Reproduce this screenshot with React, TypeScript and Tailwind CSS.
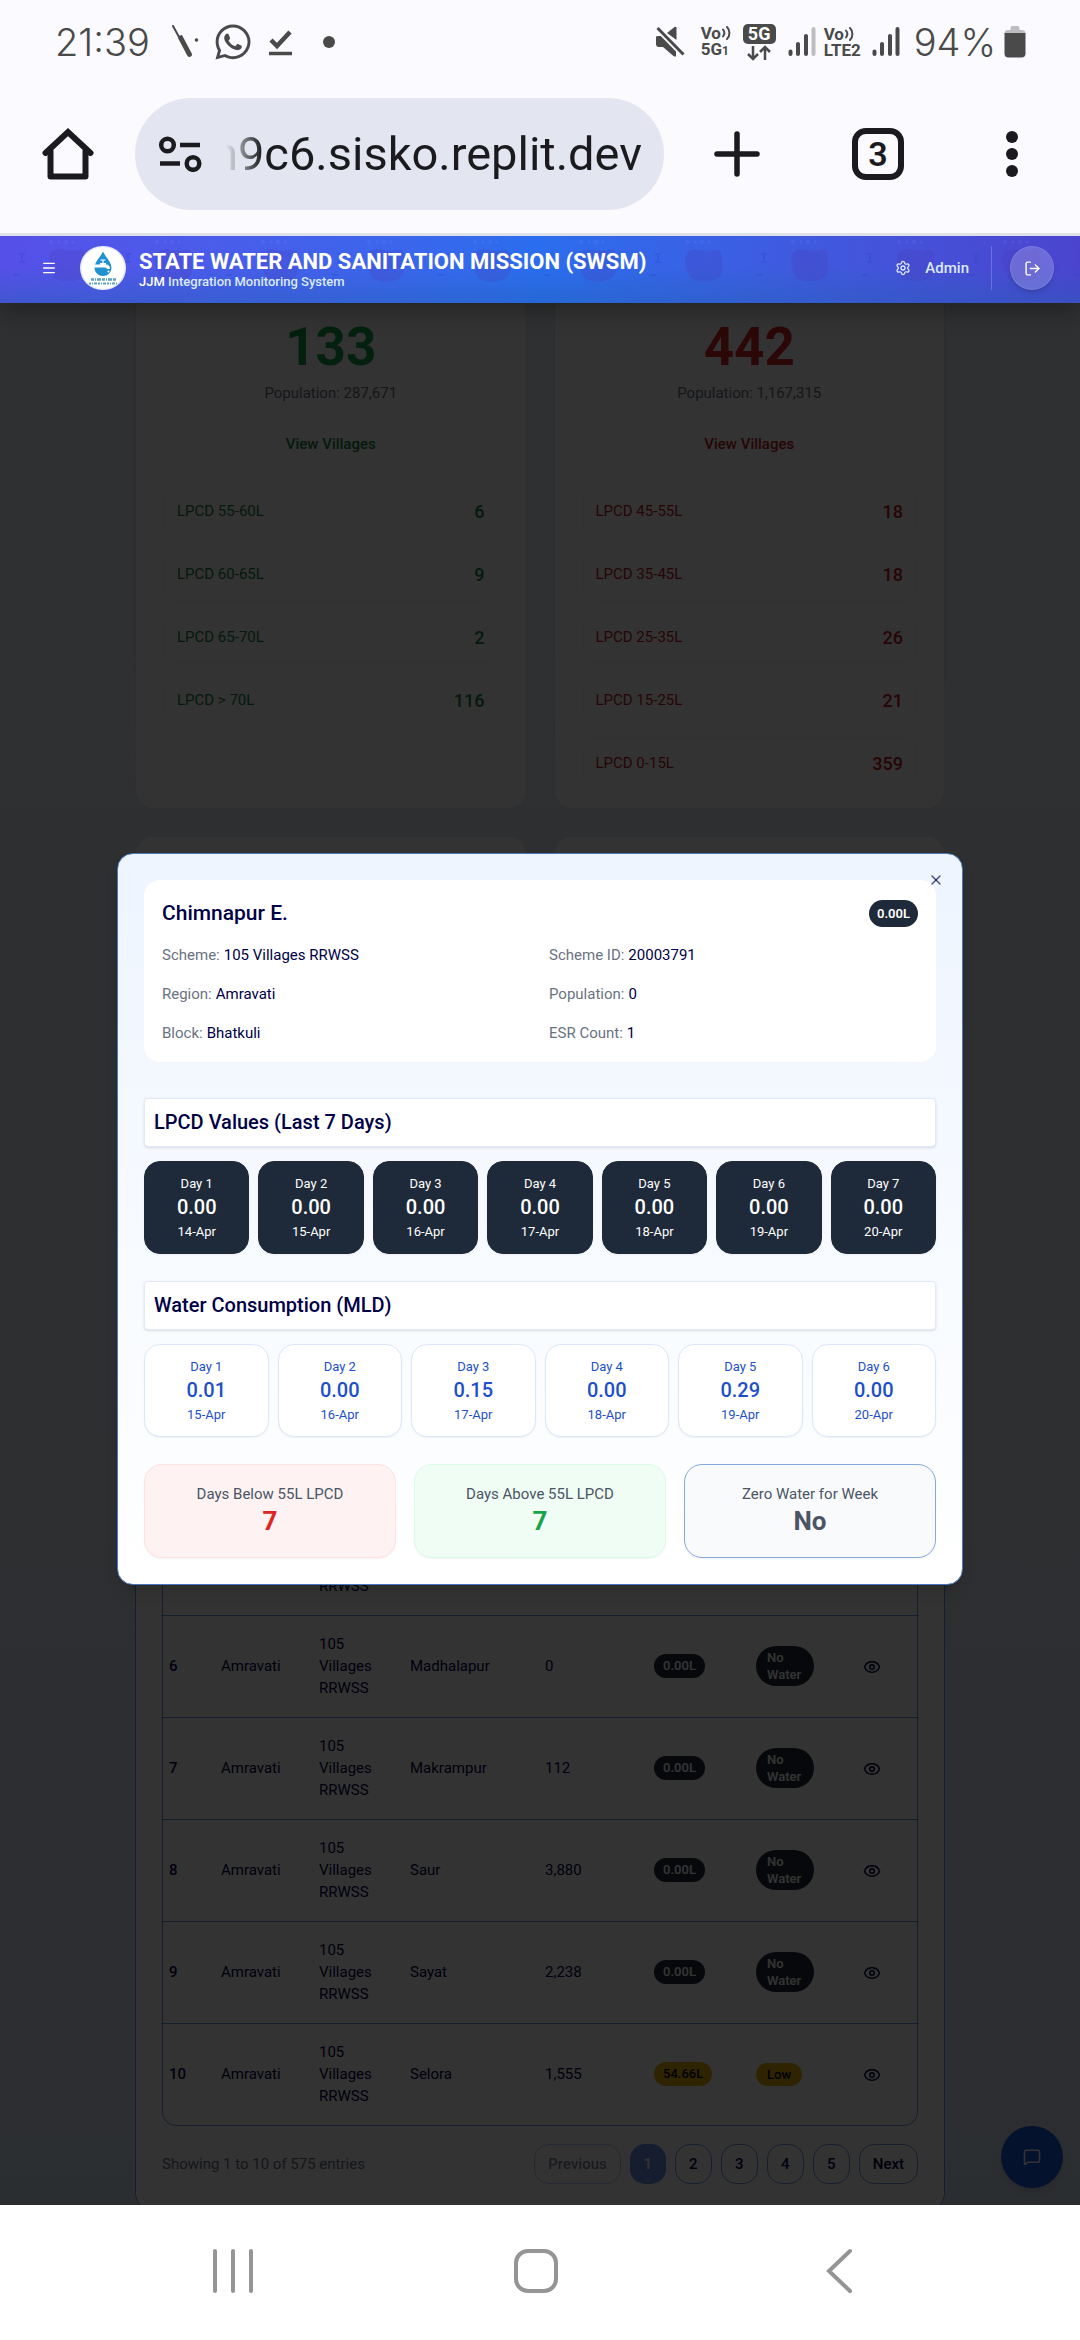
import React from "react";
import { Eye, LogOut, Menu, MessageSquare, Settings, X } from "lucide-react";
import { FaWhatsapp } from "react-icons/fa";

type Band = { label: string; count: string };

const fulfilled: Band[] = [
  { label: "LPCD 55-60L", count: "6" },
  { label: "LPCD 60-65L", count: "9" },
  { label: "LPCD 65-70L", count: "2" },
  { label: "LPCD > 70L", count: "116" },
];

const deficient: Band[] = [
  { label: "LPCD 45-55L", count: "18" },
  { label: "LPCD 35-45L", count: "18" },
  { label: "LPCD 25-35L", count: "26" },
  { label: "LPCD 15-25L", count: "21" },
  { label: "LPCD 0-15L", count: "359" },
];

const villages = [
  { id: 5, name: "Chimnapur E.", population: "0", lpcd: "0.00L", status: "No Water" },
  { id: 6, name: "Madhalapur", population: "0", lpcd: "0.00L", status: "No Water" },
  { id: 7, name: "Makrampur", population: "112", lpcd: "0.00L", status: "No Water" },
  { id: 8, name: "Saur", population: "3,880", lpcd: "0.00L", status: "No Water" },
  { id: 9, name: "Sayat", population: "2,238", lpcd: "0.00L", status: "No Water" },
  { id: 10, name: "Selora", population: "1,555", lpcd: "54.66L", status: "Low" },
];

const details = [
  ["Scheme:", "105 Villages RRWSS"],
  ["Scheme ID:", "20003791"],
  ["Region:", "Amravati"],
  ["Population:", "0"],
  ["Block:", "Bhatkuli"],
  ["ESR Count:", "1"],
];

const lpcdDays = ["14-Apr", "15-Apr", "16-Apr", "17-Apr", "18-Apr", "19-Apr", "20-Apr"];

const consumption = [
  ["0.01", "15-Apr"],
  ["0.00", "16-Apr"],
  ["0.15", "17-Apr"],
  ["0.00", "18-Apr"],
  ["0.29", "19-Apr"],
  ["0.00", "20-Apr"],
];

function Signal({ weak = false }: { weak?: boolean }) {
  return (
    <svg width="28" height="30" viewBox="0 0 28 30" fill="none" stroke="#4a4a4a" strokeWidth="4" strokeLinecap="round">
      <path d="M2.500 24.500V27M10 17V27M18 9V27" />
      <path d="M25.500 2V27" stroke={weak ? "#bdbdbf" : "#4a4a4a"} />
    </svg>
  );
}

function Volte({ line, mark }: { line: string; mark?: string }) {
  return (
    <div className="flex flex-col text-[17px] leading-[16px] font-bold">
      <div className="flex items-center">
        Vo
        <svg width="11" height="16" viewBox="0 0 11 16" fill="none" stroke="#4a4a4a" strokeWidth="2" strokeLinecap="round">
          <path d="M2 4.500C3.600 6.500 3.600 9.500 2 11.500M6 2C9.200 5 9.200 11 6 14" />
        </svg>
      </div>
      <div>
        {line}
        {mark && <span className="text-[12px]">{mark}</span>}
      </div>
    </div>
  );
}

function StatusBar() {
  return (
    <div className="flex h-[84px] shrink-0 items-center justify-between pr-[54px] pl-[55px] text-[#4a4a4a]">
      <div className="flex items-center">
        <span className="w-[98px] font-['Inter',sans-serif] text-[38px] leading-[40px] font-light whitespace-nowrap">21:39</span>
        <svg className="ml-[18px]" width="28" height="34" viewBox="0 0 28 34" fill="none">
          <path d="M2 1L8 12" stroke="#4a4a4a" strokeWidth="2" strokeLinecap="round" />
          <path d="M7 11L11 10L21 29C21.500 31.500 18 33 16.500 31L7 13Z" fill="#4a4a4a" />
          <circle cx="25.500" cy="15" r="1.800" fill="#4a4a4a" />
        </svg>
        <FaWhatsapp className="ml-[14px]" size={40} />
        <svg className="ml-[16px]" width="24" height="27" viewBox="0 0 24 27" fill="none" stroke="#4a4a4a" strokeWidth="4">
          <path d="M2 11L8 17L21 3" strokeWidth="4.500" />
          <path d="M0 24.500H23" strokeWidth="3.500" />
        </svg>
        <span className="ml-[30px] size-3 rounded-full bg-[#4a4a4a]" />
      </div>
      <div className="flex items-center">
        <svg width="31" height="32" viewBox="0 0 31 32">
          <path d="M1 11Q1 10 3 10H9L21 22V30Q20 31 18.500 30L8 21H4Q1 21 1 18Z" fill="#4a4a4a" />
          <path d="M12 7L19.500 1Q21.500 0 21.500 2V14Z" fill="#4a4a4a" />
          <path d="M2.500 2.500L28.500 29" stroke="#fbfaff" strokeWidth="6" />
          <path d="M2.500 2L28.500 28.500" stroke="#4a4a4a" strokeWidth="3" />
        </svg>
        <div className="ml-[15px] w-[33px]">
          <Volte line="5G" mark="1" />
        </div>
        <div className="ml-[9px] flex w-[33px] flex-col items-center">
          <span className="w-full rounded-[5px] bg-[#4a4a4a] text-center text-[18px] leading-[20px] font-bold text-white">5G</span>
          <svg width="26" height="17" viewBox="0 0 26 17" fill="none" stroke="#4a4a4a" strokeWidth="2.500">
            <path d="M7 2V15M2 10L7 15L12 10M19 16V3M14 8L19 3L24 8" />
          </svg>
        </div>
        <div className="ml-[12px]">
          <Signal weak />
        </div>
        <div className="ml-[8px] w-[39px]">
          <Volte line="LTE2" />
        </div>
        <div className="ml-[9px]">
          <Signal />
        </div>
        <span className="ml-[14px] font-['Inter',sans-serif] text-[38px] leading-[40px] font-light">94%</span>
        <svg className="ml-[8px]" width="22" height="32" viewBox="0 0 22 32">
          <path d="M6.500 4V2Q6.500 0 8.500 0H13.500Q15.500 0 15.500 2V4H18Q21.500 4 21.500 8H0.500Q0.500 4 4 4Z" fill="#bdbdbf" />
          <path d="M0.500 7H21.500V27.500Q21.500 31.500 17.500 31.500H4.500Q0.500 31.500 0.500 27.500Z" fill="#4a4a4a" />
        </svg>
      </div>
    </div>
  );
}

function AddressBar() {
  return (
    <div className="flex h-[152px] shrink-0 items-start border-b-[3px] border-[#dfe1ea] pt-[14px] pr-[12px] text-[#1b1b1f]">
      <button aria-label="Home" className="flex h-28 w-[135px] items-center justify-center">
        <svg width="54" height="54" viewBox="0 0 54 54" fill="none" stroke="#1b1b1f" strokeWidth="6" strokeLinejoin="round" strokeLinecap="round">
          <path d="M4.500 26L27 5L49.500 26" strokeLinejoin="miter" />
          <path d="M9.500 24V49.500H44.500V24" />
        </svg>
      </button>
      <div className="flex h-28 min-w-0 flex-1 items-center rounded-full bg-[#e3e6f0] pr-[22px] pl-[23px]">
        <svg className="shrink-0" width="44" height="36" viewBox="0 0 44 36" fill="none" stroke="#1b1b1f" strokeWidth="4.500">
          <circle cx="9.500" cy="9" r="6.300" />
          <path d="M22 9H42M2 27.500H22" />
          <circle cx="35" cy="27.500" r="6.300" />
        </svg>
        <input
          aria-label="Address"
          readOnly
          defaultValue="n9c6.sisko.replit.dev"
          className="h-16 min-w-0 flex-1 bg-transparent text-right text-[47px] outline-none [mask-image:linear-gradient(to_right,transparent_24px,black_60px)]"
        />
      </div>
      <button aria-label="New tab" className="ml-[17px] flex h-28 w-28 items-center justify-center">
        <svg width="46" height="46" viewBox="0 0 46 46" stroke="#1b1b1f" strokeWidth="5.500" strokeLinecap="round">
          <path d="M23 3V43M3 23H43" />
        </svg>
      </button>
      <button aria-label="Tabs" className="ml-[29px] flex h-28 w-28 items-center justify-center">
        <span className="flex size-[52px] items-center justify-center rounded-[14px] border-[6px] border-[#1b1b1f] text-[34px] leading-[34px] font-semibold">3</span>
      </button>
      <button aria-label="More" className="ml-[22px] flex h-28 w-28 items-center justify-center">
        <svg width="12" height="48" viewBox="0 0 12 48" fill="#1b1b1f">
          <circle cx="6" cy="7" r="6" />
          <circle cx="6" cy="24" r="6" />
          <circle cx="6" cy="41" r="6" />
        </svg>
      </button>
    </div>
  );
}

function HeaderPattern() {
  return (
    <svg className="absolute inset-0 size-full" aria-hidden="true">
      <defs>
        <pattern id="tile" width="106" height="67" patternUnits="userSpaceOnUse" x="38">
          <path d="M12 18Q16 11 28 14Q36 16 44 13Q50 16 48 28Q50 40 40 44Q26 48 16 42Q8 28 12 18Z" fill="#4a36b0" opacity="0.220" />
          <g stroke="#8a9cff" fill="none" opacity="0.150">
            <circle cx="13" cy="6" r="1.500" />
            <circle cx="21" cy="6" r="1" />
            <circle cx="28" cy="6" r="1.500" />
            <circle cx="35" cy="6" r="1" />
          </g>
          <path d="M87 18H93M90 18V26M87 26H93M82 39H88" stroke="#2038c8" strokeWidth="2" opacity="0.220" />
        </pattern>
      </defs>
      <rect width="100%" height="100%" fill="url(#tile)" />
    </svg>
  );
}

function Logo() {
  return (
    <svg className="shrink-0" width="46" height="44" viewBox="0 0 46 44">
      <rect width="46" height="44" rx="22" fill="#e6e9fb" />
      <rect x="1.500" y="1.500" width="43" height="41" rx="20.500" fill="#fff" />
      <path d="M23 5.500C25.500 11 31.500 16 31.500 22A8.500 8 0 0 1 14.500 22C14.500 16 20.500 11 23 5.500Z" fill="#1f93cf" />
      <path d="M14 18.500H20V17H26V18.500Q30 18.500 30 23H27Q27 21.500 25 21.500H14Z" fill="#fff" />
      <path d="M23 14V17M20.500 14H25.500" stroke="#fff" strokeWidth="1.200" />
      <circle cx="28.500" cy="25.500" r="1" fill="#fff" />
      <path d="M11 33.500H36" stroke="#5ba3c0" strokeWidth="2.500" strokeDasharray="3 1 1 1 4 1" />
      <path d="M9 37.500H37" stroke="#5ba3c0" strokeWidth="2" strokeDasharray="2 1 1 1 3 1" />
    </svg>
  );
}

function AppHeader() {
  return (
    <header className="relative z-30 flex h-[67px] shrink-0 items-center bg-linear-to-r from-[#5650e8] via-[#2a6dee] to-[#4b44cf] pr-[26px] pb-[3px] pl-[41px] text-white shadow-[0_10px_20px_rgba(0,0,0,0.25)]">
      <div className="absolute inset-0 bg-linear-to-b from-transparent from-45% to-[#2060b0]/40" />
      <HeaderPattern />
      <button aria-label="Menu" className="relative">
        <Menu size={16} />
      </button>
      <div className="relative ml-[23px]">
        <Logo />
      </div>
      <div className="relative ml-[13px] pt-1">
        <h1 className="text-[22px] leading-[24px] font-bold">STATE WATER AND SANITATION MISSION (SWSM)</h1>
        <p className="text-[13px] leading-[16px] font-medium text-blue-100">
          <span className="text-white">JJM</span> Integration Monitoring System
        </p>
      </div>
      <div className="relative ml-auto flex items-center">
        <button className="flex items-center gap-[14px] text-[15px] font-medium text-blue-100">
          <Settings size={16} />
          Admin
        </button>
        <span className="mr-[18px] ml-[22px] h-11 w-px bg-white/20" />
        <button aria-label="Log out" className="flex size-11 items-center justify-center rounded-full border border-white/10 bg-white/20 shadow-md">
          <LogOut size={17} />
        </button>
      </div>
    </header>
  );
}

function SummaryCard({
  total,
  population,
  bands,
  tone,
  bandTone,
}: {
  total: string;
  population: string;
  bands: Band[];
  tone: string;
  bandTone: string;
}) {
  return (
    <section className="flex flex-col rounded-b-[18px] border border-t-0 border-gray-200 bg-white px-7 pt-4 pb-[18px]">
      <p className={`text-center text-[53px] leading-[54px] font-bold ${tone}`}>{total}</p>
      <p className="mt-2 text-center text-[15px] leading-[22px] text-gray-500">Population: {population}</p>
      <button className={`mx-auto mt-5 h-10 px-4 text-[15px] font-medium ${bandTone}`}>View Villages</button>
      <ul className={`mt-5 flex flex-col gap-[9px] ${bandTone}`}>
        {bands.map((b) => (
          <li key={b.label} className="flex h-[54px] items-center justify-between rounded-[13px] border border-gray-100 px-3">
            <span className="text-[15px]">{b.label}</span>
            <span className="text-[18px] font-medium">{b.count}</span>
          </li>
        ))}
      </ul>
    </section>
  );
}

function VillageTable() {
  const cell = "px-[17px] py-0 align-middle";
  return (
    <div className="overflow-hidden rounded-[14px] border border-[#6f9ce8]">
      <table className="w-full table-fixed border-collapse text-left text-[15px] leading-[22px] text-[#000046]">
        <colgroup>
          <col className="w-[41px]" />
          <col className="w-[98px]" />
          <col className="w-[91px]" />
          <col className="w-[135px]" />
          <col className="w-[109px]" />
          <col className="w-[102px]" />
          <col className="w-[87px]" />
          <col />
        </colgroup>
        <tbody>
          {villages.map((v) => (
            <tr key={v.id} className="h-[102px] border-b border-[#6f9ce8] last:border-b-0">
              <td className="pl-[6px] font-medium">{v.id}</td>
              <td className={cell}>Amravati</td>
              <td className={cell}>105 Villages RRWSS</td>
              <td className={cell}>{v.name}</td>
              <td className={cell}>{v.population}</td>
              <td className={cell}>
                <span
                  className={
                    v.status === "Low"
                      ? "inline-block rounded-full bg-[#eab308] px-[9px] text-[13px] leading-[24px] font-medium text-black"
                      : "inline-block rounded-full bg-gray-800 px-[9px] text-[13px] leading-[24px] font-semibold text-white"
                  }
                >
                  {v.lpcd}
                </span>
              </td>
              <td className={cell}>
                <span
                  className={
                    v.status === "Low"
                      ? "inline-block rounded-full bg-[#eab308] px-[11px] py-[3px] text-[13px] leading-[17px] font-medium text-black"
                      : "-mr-2 inline-block w-[58px] rounded-[20px] bg-gray-800 px-[11px] py-[3px] text-[13px] leading-[17px] font-semibold text-white"
                  }
                >
                  {v.status}
                </span>
              </td>
              <td className="text-center">
                <button aria-label={`View ${v.name}`} className="align-middle">
                  <Eye size={18} />
                </button>
              </td>
            </tr>
          ))}
        </tbody>
      </table>
    </div>
  );
}

function Pagination() {
  const btn = "h-10 rounded-[15px] border border-[#6f9ce8] text-[15px] font-medium text-[#000046]";
  return (
    <div className="mt-[18px] flex items-center justify-between">
      <p className="text-[15px] text-gray-500">Showing 1 to 10 of 575 entries</p>
      <nav className="flex gap-[9px]">
        <button disabled className={`${btn} px-[13px] opacity-50`}>Previous</button>
        <button className="h-10 w-9 rounded-[15px] bg-[#6b93e6] text-[15px] font-medium text-white">1</button>
        {["2", "3", "4", "5"].map((n) => (
          <button key={n} className={`${btn} w-[37px]`}>
            {n}
          </button>
        ))}
        <button className={`${btn} px-[13px]`}>Next</button>
      </nav>
    </div>
  );
}

function DayCard({ day, value, date, tone }: { day: number; value: string; date: string; tone: string }) {
  return (
    <div className={`flex h-[93px] flex-col items-center justify-center rounded-[16px] border text-[13px] leading-[18px] shadow-xs ${tone}`}>
      <span>Day {day}</span>
      <span className="mb-[2px] text-[20px] leading-[28px] font-medium">{value}</span>
      <span>{date}</span>
    </div>
  );
}

function SectionTitle({ children }: { children: React.ReactNode }) {
  return (
    <h3 className="mb-[14px] rounded-[4px] border border-[#e1eafa] bg-white px-[9px] pt-[8px] pb-[9px] text-[20px] leading-[30px] font-medium text-[#000046] shadow-sm">
      {children}
    </h3>
  );
}

function VillageDialog() {
  return (
    <div
      role="dialog"
      aria-modal="true"
      aria-label="Chimnapur E."
      className="relative w-full max-w-[846px] rounded-[16px] border border-[#4a78c0] bg-linear-to-b from-[#eef5ff] to-white p-[26px] shadow-lg"
    >
      <button aria-label="Close" className="absolute top-[18px] right-[18px] text-[#000046]/70">
        <X size={16} />
      </button>
      <div className="rounded-[16px] bg-white px-[18px] pt-[20px] pb-[18px]">
        <div className="flex items-center justify-between">
          <h2 className="text-[21px] leading-[27px] font-medium text-[#000046]">Chimnapur E.</h2>
          <span className="rounded-full bg-gray-800 px-[8px] text-[13px] leading-[27px] font-semibold text-white">0.00L</span>
        </div>
        <dl className="mt-[17px] grid grid-cols-2 gap-x-[18px] gap-y-[17px] text-[15px] leading-[22px]">
          {details.map(([label, value]) => (
            <div key={label} className="flex gap-1">
              <dt className="text-gray-500">{label}</dt>
              <dd className="text-[#000046]">{value}</dd>
            </div>
          ))}
        </dl>
      </div>
      <div className="mt-9">
        <SectionTitle>LPCD Values (Last 7 Days)</SectionTitle>
        <div className="grid grid-cols-7 gap-[9px]">
          {lpcdDays.map((date, i) => (
            <DayCard key={date} day={i + 1} value="0.00" date={date} tone="border-gray-800 bg-gray-800 text-white" />
          ))}
        </div>
      </div>
      <div className="mt-[27px]">
        <SectionTitle>Water Consumption (MLD)</SectionTitle>
        <div className="grid grid-cols-6 gap-[9px]">
          {consumption.map(([value, date], i) => (
            <DayCard key={date} day={i + 1} value={value} date={date} tone="border-[#dbe8fb] bg-white text-[#1e4fc8]" />
          ))}
        </div>
      </div>
      <div className="mt-[27px] grid grid-cols-3 gap-[18px] text-center text-[15px] leading-[22px] text-gray-600">
        <div className="rounded-[18px] border border-red-100 bg-[#fef2f2] pt-[18px] pb-[20px] shadow-xs">
          <p>Days Below 55L LPCD</p>
          <p className="text-[26px] leading-[32px] font-bold text-[#dc2626]">7</p>
        </div>
        <div className="rounded-[18px] border border-green-100 bg-[#f0fdf4] pt-[18px] pb-[20px] shadow-xs">
          <p>Days Above 55L LPCD</p>
          <p className="text-[26px] leading-[32px] font-bold text-[#16a34a]">7</p>
        </div>
        <div className="rounded-[18px] border border-[#86a9e0] bg-gray-50 pt-[18px] pb-[20px] shadow-xs">
          <p>Zero Water for Week</p>
          <p className="text-[26px] leading-[32px] font-bold">No</p>
        </div>
      </div>
    </div>
  );
}

function NavigationBar() {
  return (
    <nav className="grid h-[135px] shrink-0 grid-cols-3 bg-white pr-[90px] pb-[4px] pl-[82px]">
      <button aria-label="Recent apps" className="flex items-center justify-center">
        <svg width="44" height="46" viewBox="0 0 44 46" stroke="#959595" strokeWidth="4" strokeLinecap="round">
          <path d="M4 3V43M22 3V43M40 3V43" />
        </svg>
      </button>
      <button aria-label="Home screen" className="flex items-center justify-center">
        <span className="size-11 rounded-[14px] border-4 border-[#959595]" />
      </button>
      <button aria-label="Back" className="flex items-center justify-center">
        <svg width="28" height="46" viewBox="0 0 28 46" fill="none" stroke="#959595" strokeWidth="4" strokeLinecap="round">
          <path d="M25 3L4 23L25 43" />
        </svg>
      </button>
    </nav>
  );
}

export default function App() {
  return (
    <div className="flex h-screen flex-col bg-[#fbfaff] font-['Roboto',sans-serif]">
      <StatusBar />
      <AddressBar />
      <div className="relative flex min-h-0 flex-1 flex-col overflow-hidden">
        <AppHeader />
        <main className="flex min-h-0 flex-1 flex-col overflow-hidden bg-linear-to-b from-[#eceff6] to-[#d8e4f4] px-[12.500%] pt-px">
          <div className="grid shrink-0 grid-cols-2 gap-[27px]">
            <SummaryCard total="133" population="287,671" bands={fulfilled} tone="text-[#16a34a]" bandTone="text-[#15803d]" />
            <SummaryCard total="442" population="1,167,315" bands={deficient} tone="text-[#dc2626]" bandTone="text-[#b91c1c]" />
          </div>
          <div className="mt-[27px] grid shrink-0 grid-cols-2 gap-[27px]">
            <section className="h-[320px] rounded-[18px] border border-gray-200 bg-white" />
            <section className="h-[320px] rounded-[18px] border border-gray-200 bg-white" />
          </div>
          <section className="mt-[27px] shrink-0 rounded-[18px] border border-[#6f9ce8] bg-white px-[26px] pt-[328px] pb-[26px]">
            <VillageTable />
            <Pagination />
          </section>
          <button aria-label="Open chat" className="absolute right-[17px] bottom-[17px] flex size-[62px] items-center justify-center rounded-full bg-[#1d5ae0] text-white shadow-lg">
            <MessageSquare size={18} />
          </button>
        </main>
        <div className="absolute inset-0 z-20 flex items-center justify-center bg-black/80 px-6 pb-[3px]">
          <VillageDialog />
        </div>
      </div>
      <NavigationBar />
    </div>
  );
}
